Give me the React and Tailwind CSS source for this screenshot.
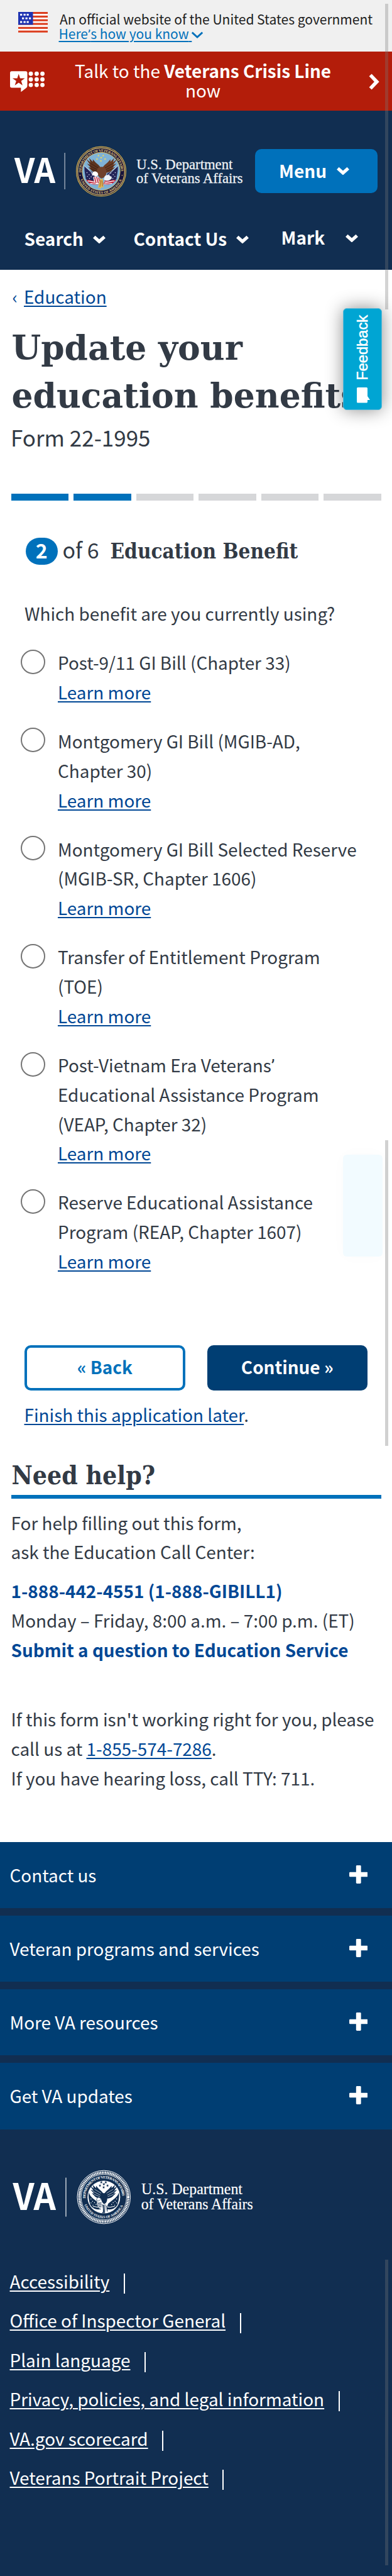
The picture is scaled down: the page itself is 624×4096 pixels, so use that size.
import React from "react";

const SANS = "font-['Noto_Sans_CJK_SC','Noto_Sans',sans-serif]";

function Chevron({ className, stroke = 5.2, color = "#fff" }) {
  return (
    <svg className={className} viewBox="0 0 20 13" fill="none">
      <path d="M1.800 2.600 L10 10 L18.200 2.600" stroke={color} strokeWidth={stroke} />
    </svg>
  );
}

function Flag() {
  const dots = [];
  [7, 18, 28].forEach((x) => dots.push([x, 9], [x, 33]));
  [13, 24, 35].forEach((x) => dots.push([x, 21]));
  return (
    <svg className="h-[33px] w-[47px]" viewBox="0 0 94 68" preserveAspectRatio="none">
      <rect width="94" height="68" fill="#fff" />
      {[0, 12, 24, 36, 49, 61].map((y) => (
        <rect key={y} y={y} width="94" height="6.4" fill="#db3e1f" />
      ))}
      <rect width="47" height="42" fill="#1e33b1" />
      {dots.map(([x, y], i) => (
        <rect key={i} x={x - 1} y={y - 3} width="6.5" height="6" fill="#fff" />
      ))}
    </svg>
  );
}

function CrisisIcon() {
  return (
    <svg className="h-[34px] w-[55px]" viewBox="0 0 168 103" preserveAspectRatio="none">
      <path
        d="M8 1 H76 Q84 1 84 9 V70 Q84 78 80 80 L53 101 V80 H8 Q0 80 0 72 V9 Q0 1 8 1Z"
        fill="#fff"
      />
      <path
        d="M42 14 L49 35 L72 35 L54 48 L61 69 L42 56 L23 69 L30 48 L12 35 L35 35Z"
        fill="#b31d0a"
      />
      {[101, 129.5, 157.5].map((x) =>
        [13, 40, 67].map((y) => <circle key={x + "-" + y} cx={x} cy={y} r="10.4" fill="#fff" />)
      )}
    </svg>
  );
}

const WING =
  "M-4 6 C-22 10 -42 4 -50 -8 L-62 -20 L-50 -18 L-68 -38 L-53 -32 L-72 -60 L-52 -44 L-58 -64 L-40 -46 L-40 -58 L-26 -42 L-12 -30 L-2 -18Z";
const STAR =
  "M0 -6 L1.6 -2 L5.8 -2 L2.4 .8 L3.6 5 L0 2.5 L-3.6 5 L-2.4 .8 L-5.8 -2 L-1.6 -2Z";
const STARS = [[-13, -76], [10, -76], [-20, -59], [19, -59], [0, -66], [-1, -50]];

function ColorSeal() {
  return (
    <g>
      <circle r="119" fill="#17133b" stroke="#c9a94f" strokeWidth="4" />
      <circle r="113" fill="none" stroke="#dcc36e" strokeWidth="3.5" />
      <circle r="91" fill="#7fb2d6" stroke="#d9c069" strokeWidth="3" />
      <path id="sealTop" d="M-95 11 A95.5 95.5 0 1 1 95 11" fill="none" />
      <path id="sealBottom" d="M-104 26 A107 107 0 0 0 104 26" fill="none" />
      <g fill="#e3cb78" className="font-['Liberation_Serif',serif] font-bold">
        <text fontSize="18">
          <textPath href="#sealTop" startOffset="6" textLength="302">DEPARTMENT OF VETERANS AFFAIRS</textPath>
        </text>
        <text fontSize="17">
          <textPath href="#sealBottom" startOffset="14" textLength="256">UNITED STATES OF AMERICA</textPath>
        </text>
      </g>
      <circle cx="-101" cy="19" r="2.5" fill="#e3cb78" />
      <circle cx="101" cy="19" r="2.5" fill="#e3cb78" />
      {STARS.map(([x, y]) => (
        <path key={x} d={STAR} transform={`translate(${x} ${y})`} fill="#e8d564" />
      ))}
      {[1, -1].map((s) => (
        <g key={s} transform={`scale(${s} 1)`}>
          <path d="M-80 -26 C-66 -8 -50 -2 -30 10 L-18 46 C-40 44 -60 52 -74 36 C-76 14 -82 2 -80 -26Z" fill="#232458" />
          <path d="M-82 -28 L-12 38" stroke="#d8e1ea" strokeWidth="3" />
          {[[-68, 6], [-58, 16], [-66, 24], [-48, 26], [-56, 34], [-38, 18], [-46, 8]].map(([x, y]) => (
            <circle key={x} cx={x} cy={y} r="2.4" fill="#d7dcec" />
          ))}
          <path d="M-72 42 C-54 36 -40 50 -18 44 L-10 62 C-34 66 -54 64 -72 42Z" fill="#c3263b" />
          <path d="M-64 47 C-50 44 -38 56 -16 51" stroke="#fff" strokeWidth="4" fill="none" />
          <path d="M-52 58 C-42 57 -32 61 -14 60" stroke="#fff" strokeWidth="3.4" fill="none" />
        </g>
      ))}
      <path d={WING} fill="#5d3420" />
      <path d={WING} fill="#6b3c23" transform="translate(4) scale(-1.02 1)" />
      <path d="M-48 -12 L-20 0 M-54 -26 L-18 -8 M-50 -38 L-14 -16 M54 -12 L24 0 M60 -26 L22 -8 M56 -38 L18 -16" stroke="#3b1f13" strokeWidth="3" />
      <path d="M-20 -10 C-8 -26 18 -26 24 -6 C30 12 20 30 2 34 C-10 30 -22 14 -20 -10Z" fill="#70412a" />
      <path d="M-42 8 C-36 -6 -16 0 -14 14 C-18 26 -32 24 -36 18 L-45 20Z" fill="#fff" />
      <path d="M-38 28 C-26 20 -8 26 -6 40 L-14 62 C-28 62 -36 48 -38 28Z" fill="#f6eef0" />
      <path d="M-32 28 L-24 56 M-22 26 L-14 56 M-12 30 L-8 48" stroke="#c3263b" strokeWidth="4.5" />
      <path d="M16 26 C26 10 46 20 52 32 C44 46 24 48 14 40Z" fill="#eef2f5" />
      <path d="M-6 36 L8 36 L12 80 L4 74 L-2 84 L-10 76 L-16 82Z" fill="#e3b754" />
      <path d="M-2 42 L-6 74 M4 44 L6 72" stroke="#8a4d24" strokeWidth="2.5" />
    </g>
  );
}

function WhiteSeal() {
  const n = "#112e51";
  return (
    <g>
      <circle r="130" fill="none" stroke="#fff" strokeWidth="3" />
      <circle r="119.500" fill="none" stroke="#fff" strokeWidth="12" strokeDasharray="5.4 2.6" />
      <circle r="111" fill="none" stroke="#fff" strokeWidth="2.4" />
      <circle r="80" fill="#fff" />
      <path id="monoTop" d="M-89 12 A90 90 0 1 1 89 12" fill="none" />
      <path id="monoBottom" d="M-99 26 A102 102 0 0 0 99 26" fill="none" />
      <g fill="#fff" className="font-['Liberation_Serif',serif] font-bold">
        <text fontSize="18">
          <textPath href="#monoTop" startOffset="6" textLength="286">DEPARTMENT OF VETERANS AFFAIRS</textPath>
        </text>
        <text fontSize="17">
          <textPath href="#monoBottom" startOffset="12" textLength="242">UNITED STATES OF AMERICA</textPath>
        </text>
      </g>
      <g transform="scale(.95)">
        {STARS.map(([x, y]) => (
          <path key={x} d={STAR} transform={`translate(${x} ${y}) scale(1.250)`} fill={n} />
        ))}
        {[1, -1].map((s) => (
          <g key={s} transform={`scale(${s} 1)`}>
            <path d="M-78 -24 C-68 4 -50 10 -22 34 L-14 62 C-34 66 -56 64 -70 40 C-76 20 -80 4 -78 -24Z" fill={n} />
            <path d="M-76 -28 L-14 34" stroke="#fff" strokeWidth="8" />
            {[[-66, 10], [-58, 22], [-66, 30], [-48, 28], [-56, 42], [-40, 38]].map(([x, y]) => (
              <circle key={x + "," + y} cx={x} cy={y} r="2.4" fill="#fff" />
            ))}
            <path d="M-56 50 C-46 44 -36 56 -18 50" stroke="#fff" strokeWidth="3.4" fill="none" />
          </g>
        ))}
        <path d={WING} fill={n} />
        <path d={WING} fill={n} transform="scale(-1 1)" />
        <path d="M-50 -14 L-20 -2 M-56 -30 L-18 -10 M-48 -40 L-14 -20 M50 -14 L20 -2 M56 -30 L18 -10 M48 -40 L14 -20" stroke="#fff" strokeWidth="2" />
        <path d="M-14 -14 C-4 -24 12 -22 16 -6 C20 12 16 30 2 36 C-10 30 -18 10 -14 -14Z" fill={n} />
        <path d="M-36 8 C-30 -4 -16 2 -16 12 L-26 20 L-38 18Z" fill="#fff" stroke={n} strokeWidth="2" />
        <path d="M-36 28 C-26 20 -10 26 -8 42 L-14 60 C-28 60 -34 46 -36 28Z" fill="#fff" />
        <path d="M-32 32 L-12 30 M-32 41 L-10 40 M-28 50 L-12 50" stroke={n} strokeWidth="4" />
        <path d="M-6 38 L0 74 L-8 82 M6 38 L4 84 M14 44 L18 74" stroke={n} strokeWidth="3.4" fill="none" />
        <path d="M-2 40 L-2 84" stroke={n} strokeWidth="5" />
      </g>
    </g>
  );
}

function HeaderLogo() {
  return (
    <svg className="h-[84px] w-[366px] overflow-visible font-normal" viewBox="22 228 366 84">
      <text x="23" y="288.700" fontSize="53.500" textLength="65" lengthAdjust="spacingAndGlyphs" fill="#fff" className="font-['Noto_Sans_CJK_SC',sans-serif] font-bold">VA</text>
      <rect x="102.300" y="241" width="1.700" height="58" fill="#8796a8" />
      <g transform="translate(161 270.500) scale(.331)">
        <ColorSeal />
      </g>
      <g fill="#eef1f4" stroke="#eef1f4" strokeWidth=".3" className="font-['Liberation_Serif',serif]" fontSize="23.800">
        <text x="217.300" y="266.700" textLength="153" lengthAdjust="spacingAndGlyphs">U.S. Department</text>
        <text x="217" y="288.500" textLength="169.500" lengthAdjust="spacingAndGlyphs">of Veterans Affairs</text>
      </g>
    </svg>
  );
}

function FooterLogo() {
  return (
    <svg className="h-[88px] w-[386px] overflow-visible" viewBox="19 3447 386 88">
      <text x="20.500" y="3511.500" fontSize="57.500" textLength="68.500" lengthAdjust="spacingAndGlyphs" fill="#fff" className="font-['Noto_Sans_CJK_SC',sans-serif] font-bold">VA</text>
      <rect x="104.300" y="3460.600" width="1.300" height="62" fill="#e4e8ec" />
      <g transform="translate(165.300 3491.500) scale(.3255)">
        <WhiteSeal />
      </g>
      <g fill="#fff" stroke="#fff" strokeWidth=".2" className="font-['Liberation_Serif',serif]" fontSize="25.500">
        <text x="225" y="3487" textLength="161" lengthAdjust="spacingAndGlyphs">U.S. Department</text>
        <text x="224.700" y="3511.300" textLength="178" lengthAdjust="spacingAndGlyphs">of Veterans Affairs</text>
      </g>
    </svg>
  );
}

function Banner() {
  return (
    <div className="flex h-[82px] bg-[#f0f0f0] pl-[29px] text-[21px] leading-[23px]">
      <div className="pt-[19px]">
        <Flag />
      </div>
      <div className="pl-[17.500px] pt-[18.500px] whitespace-nowrap">
        <div className="pl-[1.500px] text-[#212121]">An official website of the United States government</div>
        <div className="flex text-[#0071bb]">
          <span className="whitespace-pre underline decoration-2 underline-offset-[2.500px]">
            Here<span className="font-['Roboto'] leading-none">’</span>s how you know{" "}
          </span>
          <Chevron className="mt-[7px] -ml-[1px] h-[13px] w-[20px]" stroke={2.8} color="#0071bb" />
        </div>
      </div>
    </div>
  );
}

function CrisisLine() {
  return (
    <div className="flex h-[93.500px] bg-[#b31d0a] text-white">
      <div className="w-[107px] pl-[15.500px] pt-[31px]">
        <CrisisIcon />
      </div>
      <div className="w-[432px] pt-[14.500px] text-center text-[27.900px] leading-[31.500px]">
        Talk to the <b>Veterans Crisis Line</b>
        <br />
        now
      </div>
      <svg className="mt-[34px] ml-[47px] h-[28px] w-[19px]" viewBox="0 0 19 28" fill="none">
        <path d="M3.600 3.400 L13.800 14 L3.600 24.600" stroke="#fff" strokeWidth="5.600" />
      </svg>
    </div>
  );
}

function Header() {
  return (
    <header className="h-[253.800px] bg-[#112e51] text-[28px] font-bold text-white">
      <div className="flex items-center pl-[22px] pt-[54px] h-[138px]">
        <HeaderLogo />
        <button className="ml-[17.600px] mt-[1px] flex h-[70px] w-[195px] items-center rounded-[10px] bg-[#0071bb] pb-[1.500px] pl-[38.500px] font-bold leading-[46px]">
          <span className="w-[92px] text-left">Menu</span>
          <Chevron className="h-[13px] w-[20px]" />
        </button>
      </div>
      <nav className="flex pt-[50.700px] pl-[38.500px] leading-[30px] whitespace-nowrap">
        <div className="flex w-[174px]">
          <span className="w-[109px]">Search</span>
          <Chevron className="mt-[10px] h-[13px] w-[20px]" />
        </div>
        <div className="flex w-[235px]">
          <span className="w-[163.500px]">Contact Us</span>
          <Chevron className="mt-[10px] h-[13px] w-[20px]" />
        </div>
        <div className="-mt-[2px] flex">
          <span className="w-[102px]">Mark</span>
          <Chevron className="mt-[10px] h-[13px] w-[20px]" />
        </div>
      </nav>
    </header>
  );
}

const OPTIONS = [
  ["Post-9/11 GI Bill (Chapter 33)"],
  ["Montgomery GI Bill (MGIB-AD,", "Chapter 30)"],
  ["Montgomery GI Bill Selected Reserve", "(MGIB-SR, Chapter 1606)"],
  ["Transfer of Entitlement Program", "(TOE)"],
  ["Post-Vietnam Era Veterans’", "Educational Assistance Program", "(VEAP, Chapter 32)"],
  ["Reserve Educational Assistance", "Program (REAP, Chapter 1607)"],
];

function OptionLine({ text }) {
  const [head, tail] = text.split("’");
  return (
    <div>
      {head}
      {tail !== undefined && <span className="font-['Roboto'] leading-none">’</span>}
    </div>
  );
}

function Options() {
  return (
    <div className="mt-[31.500px] flex flex-col gap-[31.220px] pl-[33.300px]">
      {OPTIONS.map((lines) => (
        <label key={lines[0]} className="flex gap-[19.700px]">
          <span className="mt-[2.600px] size-[39px] shrink-0 rounded-full border-2 border-[#757575] bg-white" />
          <span className="whitespace-nowrap">
            {lines.map((l) => (
              <OptionLine key={l} text={l} />
            ))}
            <a className="block text-[#004795] underline decoration-2 underline-offset-[3px]">Learn more</a>
          </span>
        </label>
      ))}
    </div>
  );
}

function Main() {
  return (
    <main className="h-[2499.800px] bg-white pt-[19px] text-[27.900px] leading-[46.830px] text-[#323a45] whitespace-nowrap">
      <div className="pl-[19.500px] text-[#004795]">
        <span className="inline-block w-[18.500px]">‹</span>
        <a className="underline decoration-2 underline-offset-[3px]">Education</a>
      </div>
      <h1 className="mt-[20.500px] pl-[18.500px] font-['DejaVu_Serif',serif] text-[53.500px] leading-[76.500px] font-bold">
        Update your
        <br />
        education benefits
      </h1>
      <div className="mt-[3px] pl-[17px] text-[35px]">Form 22-1995</div>
      <div className="mt-[66.100px] ml-[17.500px] flex w-[589px] gap-[8px]">
        {[1, 2, 3, 4, 5, 6].map((n) => (
          <div key={n} className={n < 3 ? "h-[11.600px] flex-1 bg-[#0071bb]" : "h-[11.600px] flex-1 bg-[#d6d7d9]"} />
        ))}
      </div>
      <div className="mt-[58.500px] flex h-[43px] pl-[41px] text-[34px] leading-[43px]">
        <span className="h-[43px] w-[50.500px] rounded-full bg-[#0071bb] text-center text-[32px] leading-[38px] font-bold text-white">2</span>
        <span className="-mt-[3px] ml-[8px] w-[76px]">of 6</span>
        <h2 className="font-['DejaVu_Serif_Condensed','DejaVu_Serif',serif] text-[33px] font-bold">Education Benefit</h2>
      </div>
      <div className="mt-[54px] pl-[39px]">Which benefit are you currently using?</div>
      <Options />
      <div className="mt-[109.550px] flex gap-[35px] pl-[39px] font-bold">
        <button className="h-[72.300px] w-[255.500px] rounded-[10px] border-4 border-[#0071bb] bg-white pb-[3px] font-bold text-[#0071bb]">« Back</button>
        <button className="h-[72.300px] w-[255.500px] rounded-[10px] bg-[#003e73] pb-[3px] font-bold text-white">Continue »</button>
      </div>
      <div className="mt-[15.100px] pl-[38.500px]">
        <a className="text-[#004795] underline decoration-2 underline-offset-[3px]">Finish this application later</a>.
      </div>
      <h2 className="mt-[48.600px] ml-[17.500px] h-[61.300px] w-[589px] border-b-6 border-[#0071bb] pl-[1px] font-['DejaVu_Serif_Condensed','DejaVu_Serif',serif] text-[40.600px] leading-[50px] font-bold">
        Need help?
      </h2>
      <div className="pl-[17.500px]">
        <p className="mt-[15px]">
          For help filling out this form,
          <br />
          ask the Education Call Center:
        </p>
        <p className="mt-[15.100px]">
          <b className="text-[#004795]">1-888-442-4551 (1-888-GIBILL1)</b>
          <br />
          Monday – Friday, 8:00 a.m. – 7:00 p.m. (ET)
          <br />
          <b className="text-[#004795]">Submit a question to Education Service</b>
        </p>
        <p className="mt-[63px]">
          If this form isn't working right for you, please
          <br />
          call us at <a className="text-[#004795] underline decoration-2 underline-offset-[3px]">1-855-574-7286</a>.
          <br />
          If you have hearing loss, call TTY: 711.
        </p>
      </div>
    </main>
  );
}

function Footer() {
  return (
    <footer className="h-[1167px] bg-[#112e51] text-[27.900px] leading-[46.800px] text-white whitespace-nowrap">
      <div className="flex flex-col gap-[11.800px]">
        {["Contact us", "Veteran programs and services", "More VA resources", "Get VA updates"].map((t) => (
          <div key={t} className="flex h-[105.280px] justify-between bg-[#003e73] pt-[28.600px] pr-[39px] pl-[15.500px]">
            <span>{t}</span>
            <svg className="mt-[8.600px] h-[29px] w-[29.500px]" viewBox="0 0 30 30" preserveAspectRatio="none">
              <rect x="11" width="8" height="30" rx="1.500" fill="#fff" />
              <rect y="11" width="30" height="8" rx="1.500" fill="#fff" />
            </svg>
          </div>
        ))}
      </div>
      <div className="flex pt-[63.800px] pl-[19px]">
        <FooterLogo />
      </div>
      <ul className="pt-[58.600px] pl-[15.500px] leading-[62.440px]">
        {[
          "Accessibility",
          "Office of Inspector General",
          "Plain language",
          "Privacy, policies, and legal information",
          "VA.gov scorecard",
          "Veterans Portrait Project",
        ].map((t) => (
          <li key={t} className="flex h-[62.440px] items-center">
            <a className="underline decoration-2 underline-offset-[3px]">{t}</a>
            <span className="mt-[8px] ml-[22.500px] h-[32px] w-[2px] bg-white" />
          </li>
        ))}
      </ul>
    </footer>
  );
}

function Feedback() {
  return (
    <div className="absolute top-[490px] left-[545.700px] flex h-[162px] w-[62.500px] flex-col items-center justify-end rounded-[6px] border border-[#5cb9d8] bg-[#00a5d3] pb-[10.500px] shadow-[0_0_28px_rgba(0,0,0,.45)]">
      <span className="rotate-180 pt-[11px] font-['Liberation_Sans',sans-serif] text-[23.800px] leading-[28px] tracking-[-0.100px] text-white [-webkit-text-stroke:0.500px_#fff] [writing-mode:vertical-rl]">
        Feedback
      </span>
      <svg className="ml-[4px] h-[24.500px] w-[21px]" viewBox="0 0 21 24.500">
        <path d="M1.500 0 H15.500 Q17 0 17 1.500 V14 L21 20 H17 V23 Q17 24.500 15.500 24.500 H1.500 Q0 24.500 0 23 V1.500 Q0 0 1.500 0Z" fill="#fff" />
      </svg>
    </div>
  );
}

export default function App() {
  return (
    <div className={`relative h-[4096px] w-[624px] overflow-hidden bg-white ${SANS}`}>
      <Banner />
      <CrisisLine />
      <Header />
      <Main />
      <Footer />
      <div className="absolute top-[6px] left-[612.500px] h-[485.800px] w-[5.500px] bg-[rgba(120,120,120,.32)]" />
      <div className="absolute top-[1812.800px] left-[612.500px] h-[486px] w-[5.500px] bg-[rgba(0,0,0,.18)]" />
      <div className="absolute top-[3592.600px] left-[612.500px] h-[486px] w-[5.500px] bg-[rgba(120,120,120,.32)]" />
      <div className="absolute top-[1836.400px] left-[546px] h-[162px] w-[62.500px] rounded-[6px] bg-[#f2fbff] shadow-[0_0_26px_rgba(0,0,0,.02)]" />
      <Feedback />
    </div>
  );
}
